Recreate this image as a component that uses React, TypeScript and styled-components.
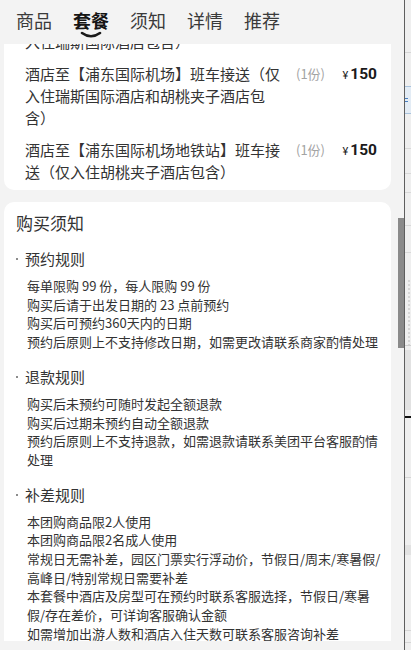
import React, { useLayoutEffect, useRef } from "react";
import styled, { createGlobalStyle } from "styled-components";

const GlobalStyle = createGlobalStyle`
  html, body { margin: 0; padding: 0; background: #f3f3f3; }
  body {
    font-family: "Noto Sans CJK SC", "Noto Sans", sans-serif;
    color: #333;
    -webkit-font-smoothing: antialiased;
  }
  * { box-sizing: border-box; }
`;

const Shell = styled.div`
  display: flex;
  width: 411px;
  height: 650px;
  overflow: hidden;
  background: #f3f3f3;
`;

const Main = styled.div`
  width: 398px;
  display: flex;
  flex-direction: column;
`;

const TabBar = styled.nav`
  height: 44px;
  flex: 0 0 44px;
  display: flex;
  align-items: flex-start;
  gap: 21px;
  padding: 8px 0 0 16px;
  background: #f3f3f3;
`;

const Tab = styled.div<{ $active?: boolean }>`
  position: relative;
  font-size: 18px;
  line-height: 24px;
  color: ${(p) => (p.$active ? "#151515" : "#3a3a3a")};
  font-weight: ${(p) => (p.$active ? 700 : 400)};
  white-space: nowrap;
`;

const Indicator = styled.svg`
  position: absolute;
  top: 23px;
  left: 50%;
  transform: translateX(-50%);
`;

const Viewport = styled.div`
  height: 597px;
  flex: 0 0 597px;
  overflow: hidden;
  padding: 0 7px 0 4px;
`;

const Footer = styled.div`
  flex: 1;
`;

const Card = styled.section<{ $pt: number; $pb: number }>`
  background: #fff;
  border-radius: 10px;
  padding-top: ${(p) => p.$pt}px;
  padding-bottom: ${(p) => p.$pb}px;
  & + & {
    margin-top: 12px;
  }
`;

const ItemList = styled.div`
  display: flex;
  flex-direction: column;
  gap: 10px;
  padding: 0 14px 0 21px;
`;

const ItemRow = styled.div`
  display: flex;
  align-items: flex-start;
  line-height: 22px;
`;

const ItemName = styled.div`
  flex: 0 0 262px;
  font-size: 15px;
  color: #333;
`;

const Qty = styled.div`
  margin-left: 9px;
  font-size: 13px;
  color: #a3a3a3;
  white-space: nowrap;
`;

const Price = styled.div`
  margin-left: auto;
  white-space: nowrap;
  color: #1a1a1a;
  font-family: "Roboto", "Noto Sans", sans-serif;
`;

const Yen = styled.span`
  font-size: 11px;
  margin-right: 2px;
`;

const Amount = styled.span`
  font-size: 15.5px;
  font-weight: 700;
`;

const NoticeBody = styled.div`
  padding: 0 10px 0 12px;
`;

const Title = styled.h2`
  margin: 0;
  font-size: 17px;
  line-height: 24px;
  font-weight: 400;
  color: #333;
`;

const Section = styled.div<{ $gap: number }>`
  margin-top: ${(p) => p.$gap}px;
`;

const SectionHead = styled.div`
  display: flex;
  align-items: center;
  height: 22px;
  font-size: 15px;
  line-height: 22px;
  color: #333;
`;

const Dot = styled.span`
  width: 9px;
  display: flex;
  &::before {
    content: "";
    width: 2px;
    height: 2px;
    border-radius: 1px;
    background: #666;
  }
`;

const Lines = styled.div`
  margin-top: 7px;
  padding-left: 11px;
  font-size: 13px;
  line-height: 18.7px;
  color: #333;
`;

const Line = styled.div``;

const ScrollTrack = styled.div`
  width: 6px;
  display: flex;
  flex-direction: column;
`;

const Thumb = styled.div<{ $top: number; $h: number }>`
  margin-top: ${(p) => p.$top}px;
  height: ${(p) => p.$h}px;
  background: #8a8a8a;
`;

const Divider = styled.div`
  width: 1px;
  background: #5e5e5e;
`;

const Backdrop = styled.svg`
  width: 6px;
  height: 650px;
  display: block;
`;

const items = [
  ["酒店至【浦东国际机场】班车接送（仅入住瑞斯国际酒店包含）"],
  ["酒店至【浦东国际机场】班车接送（仅入住瑞斯国际酒店和胡桃夹子酒店包含）"],
  ["酒店至【浦东国际机场地铁站】班车接送（仅入住胡桃夹子酒店包含）"],
];

const sections = [
  {
    title: "预约规则",
    lines: [
      "每单限购 99 份，每人限购 99 份",
      "购买后请于出发日期的 23 点前预约",
      "购买后可预约360天内的日期",
      "预约后原则上不支持修改日期，如需更改请联系商家酌情处理",
    ],
  },
  {
    title: "退款规则",
    lines: [
      "购买后未预约可随时发起全额退款",
      "购买后过期未预约自动全额退款",
      "预约后原则上不支持退款，如需退款请联系美团平台客服酌情处理",
    ],
  },
  {
    title: "补差规则",
    lines: [
      "本团购商品限2人使用",
      "本团购商品限2名成人使用",
      "常规日无需补差，园区门票实行浮动价，节假日/周末/寒暑假/高峰日/特别常规日需要补差",
      "本套餐中酒店及房型可在预约时联系客服选择，节假日/寒暑假/存在差价，可详询客服确认金额",
      "如需增加出游人数和酒店入住天数可联系客服咨询补差",
    ],
  },
];

const tabs = ["商品", "套餐", "须知", "详情", "推荐"];

export default function App() {
  const viewRef = useRef<HTMLDivElement>(null);
  useLayoutEffect(() => {
    if (viewRef.current) viewRef.current.scrollTop = 47;
  }, []);

  return (
    <>
      <GlobalStyle />
      <Shell>
        <Main>
          <TabBar>
            {tabs.map((t) => (
              <Tab key={t} $active={t === "套餐"}>
                {t}
                {t === "套餐" && (
                  <Indicator width="22" height="8" viewBox="0 0 22 8">
                    <path
                      d="M2 2 Q11 8.5 20 2"
                      fill="none"
                      stroke="#1a1a1a"
                      strokeWidth="2.6"
                      strokeLinecap="round"
                    />
                  </Indicator>
                )}
              </Tab>
            ))}
          </TabBar>
          <Viewport ref={viewRef}>
            <Card $pt={12} $pb={7}>
              <ItemList>
                {items.map(([name], i) => (
                  <ItemRow key={i}>
                    <ItemName>{name}</ItemName>
                    <Qty>(1份)</Qty>
                    <Price>
                      <Yen>¥</Yen>
                      <Amount>150</Amount>
                    </Price>
                  </ItemRow>
                ))}
              </ItemList>
            </Card>
            <Card $pt={9} $pb={20}>
              <NoticeBody>
                <Title>购买须知</Title>
                {sections.map((s, i) => (
                  <Section key={s.title} $gap={i === 0 ? 13 : 14}>
                    <SectionHead>
                      <Dot />
                      {s.title}
                    </SectionHead>
                    <Lines>
                      {s.lines.map((l) => (
                        <Line key={l}>{l}</Line>
                      ))}
                    </Lines>
                  </Section>
                ))}
              </NoticeBody>
            </Card>
          </Viewport>
          <Footer />
        </Main>
        <ScrollTrack>
          <Thumb $top={218} $h={130} />
        </ScrollTrack>
        <Divider />
        <Backdrop viewBox="0 0 6 650" preserveAspectRatio="none">
          <rect x="0" y="0" width="6" height="650" fill="#efefef" />
          <rect x="0" y="52" width="6" height="1" fill="#d6d6d6" />
          <rect x="0" y="86" width="6" height="28" fill="#e3ecf5" />
          <rect x="0" y="86" width="6" height="1" fill="#a9c3dd" />
          <rect x="0" y="113" width="6" height="1" fill="#a9c3dd" />
          <rect x="0" y="98" width="3" height="1" fill="#4a7fc0" />
          <rect x="0" y="101" width="3" height="1" fill="#4a7fc0" />
          <rect x="0" y="148" width="6" height="1" fill="#d9d9d9" />
          <rect x="0" y="173" width="6" height="1" fill="#d9d9d9" />
          <rect x="0" y="192" width="6" height="1" fill="#d9d9d9" />
          <rect x="0" y="225" width="6" height="1" fill="#d9d9d9" />
          <rect x="0" y="252" width="6" height="1" fill="#d9d9d9" />
          <line x1="4" y1="280" x2="4" y2="345" stroke="#bdbdbd" strokeWidth="1" strokeDasharray="2 2" />
          <rect x="0" y="345" width="6" height="1" fill="#cfcfcf" />
          <rect x="0" y="350" width="6" height="60" fill="#e2e2e2" />
          <rect x="0" y="416" width="6" height="2" fill="#111" />
          <rect x="0" y="477" width="6" height="1" fill="#d6d6d6" />
          <rect x="0" y="545" width="6" height="10" fill="#e2e2e2" />
          <rect x="0" y="630" width="6" height="1" fill="#d6d6d6" />
          <rect x="0" y="642" width="6" height="1" fill="#d6d6d6" />
        </Backdrop>
      </Shell>
    </>
  );
}
